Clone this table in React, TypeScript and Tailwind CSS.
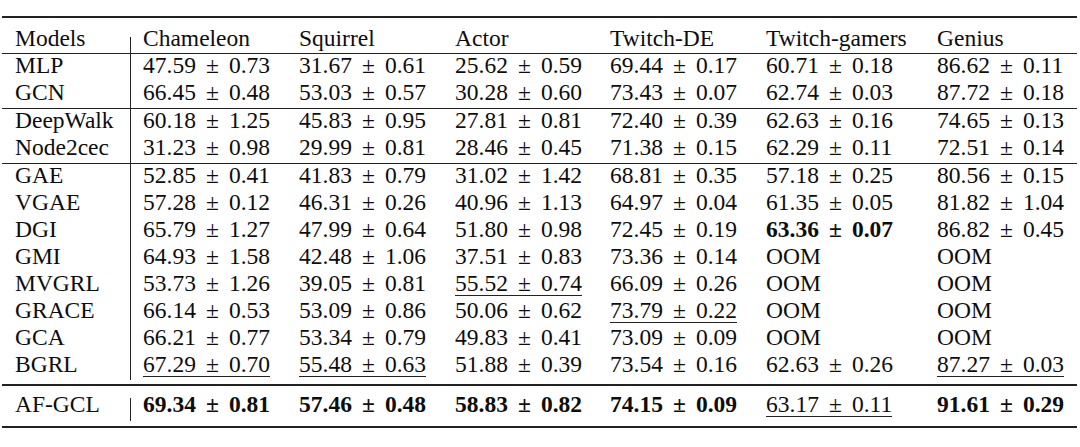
import type { ReactNode } from "react";

// "*" prefix = bold, "_" prefix = underlined (second best)
const header = ["Chameleon", "Squirrel", "Actor", "Twitch-DE", "Twitch-gamers", "Genius"];

const groups: [string, string[]][][] = [
  [
    ["MLP", ["47.59±0.73", "31.67±0.61", "25.62±0.59", "69.44±0.17", "60.71±0.18", "86.62±0.11"]],
    ["GCN", ["66.45±0.48", "53.03±0.57", "30.28±0.60", "73.43±0.07", "62.74±0.03", "87.72±0.18"]],
  ],
  [
    ["DeepWalk", ["60.18±1.25", "45.83±0.95", "27.81±0.81", "72.40±0.39", "62.63±0.16", "74.65±0.13"]],
    ["Node2cec", ["31.23±0.98", "29.99±0.81", "28.46±0.45", "71.38±0.15", "62.29±0.11", "72.51±0.14"]],
  ],
  [
    ["GAE", ["52.85±0.41", "41.83±0.79", "31.02±1.42", "68.81±0.35", "57.18±0.25", "80.56±0.15"]],
    ["VGAE", ["57.28±0.12", "46.31±0.26", "40.96±1.13", "64.97±0.04", "61.35±0.05", "81.82±1.04"]],
    ["DGI", ["65.79±1.27", "47.99±0.64", "51.80±0.98", "72.45±0.19", "*63.36±0.07", "86.82±0.45"]],
    ["GMI", ["64.93±1.58", "42.48±1.06", "37.51±0.83", "73.36±0.14", "OOM", "OOM"]],
    ["MVGRL", ["53.73±1.26", "39.05±0.81", "_55.52±0.74", "66.09±0.26", "OOM", "OOM"]],
    ["GRACE", ["66.14±0.53", "53.09±0.86", "50.06±0.62", "_73.79±0.22", "OOM", "OOM"]],
    ["GCA", ["66.21±0.77", "53.34±0.79", "49.83±0.41", "73.09±0.09", "OOM", "OOM"]],
    ["BGRL", ["_67.29±0.70", "_55.48±0.63", "51.88±0.39", "73.54±0.16", "62.63±0.26", "_87.27±0.03"]],
  ],
];

const ours: [string, string[]] = [
  "AF-GCL",
  ["*69.34±0.81", "*57.46±0.48", "*58.83±0.82", "*74.15±0.09", "_63.17±0.11", "*91.61±0.29"],
];

const cols = "grid grid-cols-[129px_156px_156px_155px_156px_171px_152px]";

function Value({ raw }: { raw: string }) {
  const bold = raw.startsWith("*");
  const under = raw.startsWith("_");
  const text = bold || under ? raw.slice(1) : raw;
  if (!text.includes("±")) return <span>{text}</span>;
  const [m, s] = text.split("±");
  return (
    <span
      className={
        (bold ? "font-bold " : "") +
        (under ? "inline-block pb-px border-b border-[#222] " : "") +
        "whitespace-nowrap"
      }
    >
      {m}
      <span className="inline-block w-[33px] text-center">±</span>
      {s}
    </span>
  );
}

function Row({
  label,
  cells,
  line = "full",
  className = "",
}: {
  label: ReactNode;
  cells: ReactNode[];
  line?: "full" | "header" | "last";
  className?: string;
}) {
  const lineCls =
    line === "header" ? "mt-[10px]" : line === "last" ? "my-[5px]" : "";
  return (
    <div className={cols + " " + className}>
      <div className="flex">
        <div className="flex-1 pl-[13px]">{label}</div>
        <div className={"w-px self-stretch bg-[#222] " + lineCls} />
      </div>
      {cells.map((c, i) => (
        <div key={i} className="pl-[12px]">
          {c}
        </div>
      ))}
    </div>
  );
}

export default function App() {
  return (
    <div className="w-[1080px] h-[447px] bg-white pt-[16px] pl-[2px] text-[#0d0d0d] font-['Liberation_Serif',serif] text-[23.5px] leading-[22px]">
      <div className="w-[1075px] border-t-2 border-b-2 border-[#222]">
        <Row
          label="Models"
          cells={header}
          line="header"
          className="h-[36px] pt-[9px] border-b border-[#222]"
        />
        {groups.map((g, gi) => (
          <div
            key={gi}
            className={gi < groups.length - 1 ? "border-b border-[#222]" : ""}
          >
            {g.map(([name, vals]) => (
              <Row
                key={name}
                label={name}
                cells={vals.map((v, i) => <Value key={i} raw={v} />)}
                className="h-[27px]"
              />
            ))}
          </div>
        ))}
        <div className="h-[4px]" />
        <div className="border-t-2 border-[#222]">
          <Row
            label={ours[0]}
            cells={ours[1].map((v, i) => <Value key={i} raw={v} />)}
            line="last"
            className="h-[40px] pt-[7px]"
          />
        </div>
      </div>
    </div>
  );
}
